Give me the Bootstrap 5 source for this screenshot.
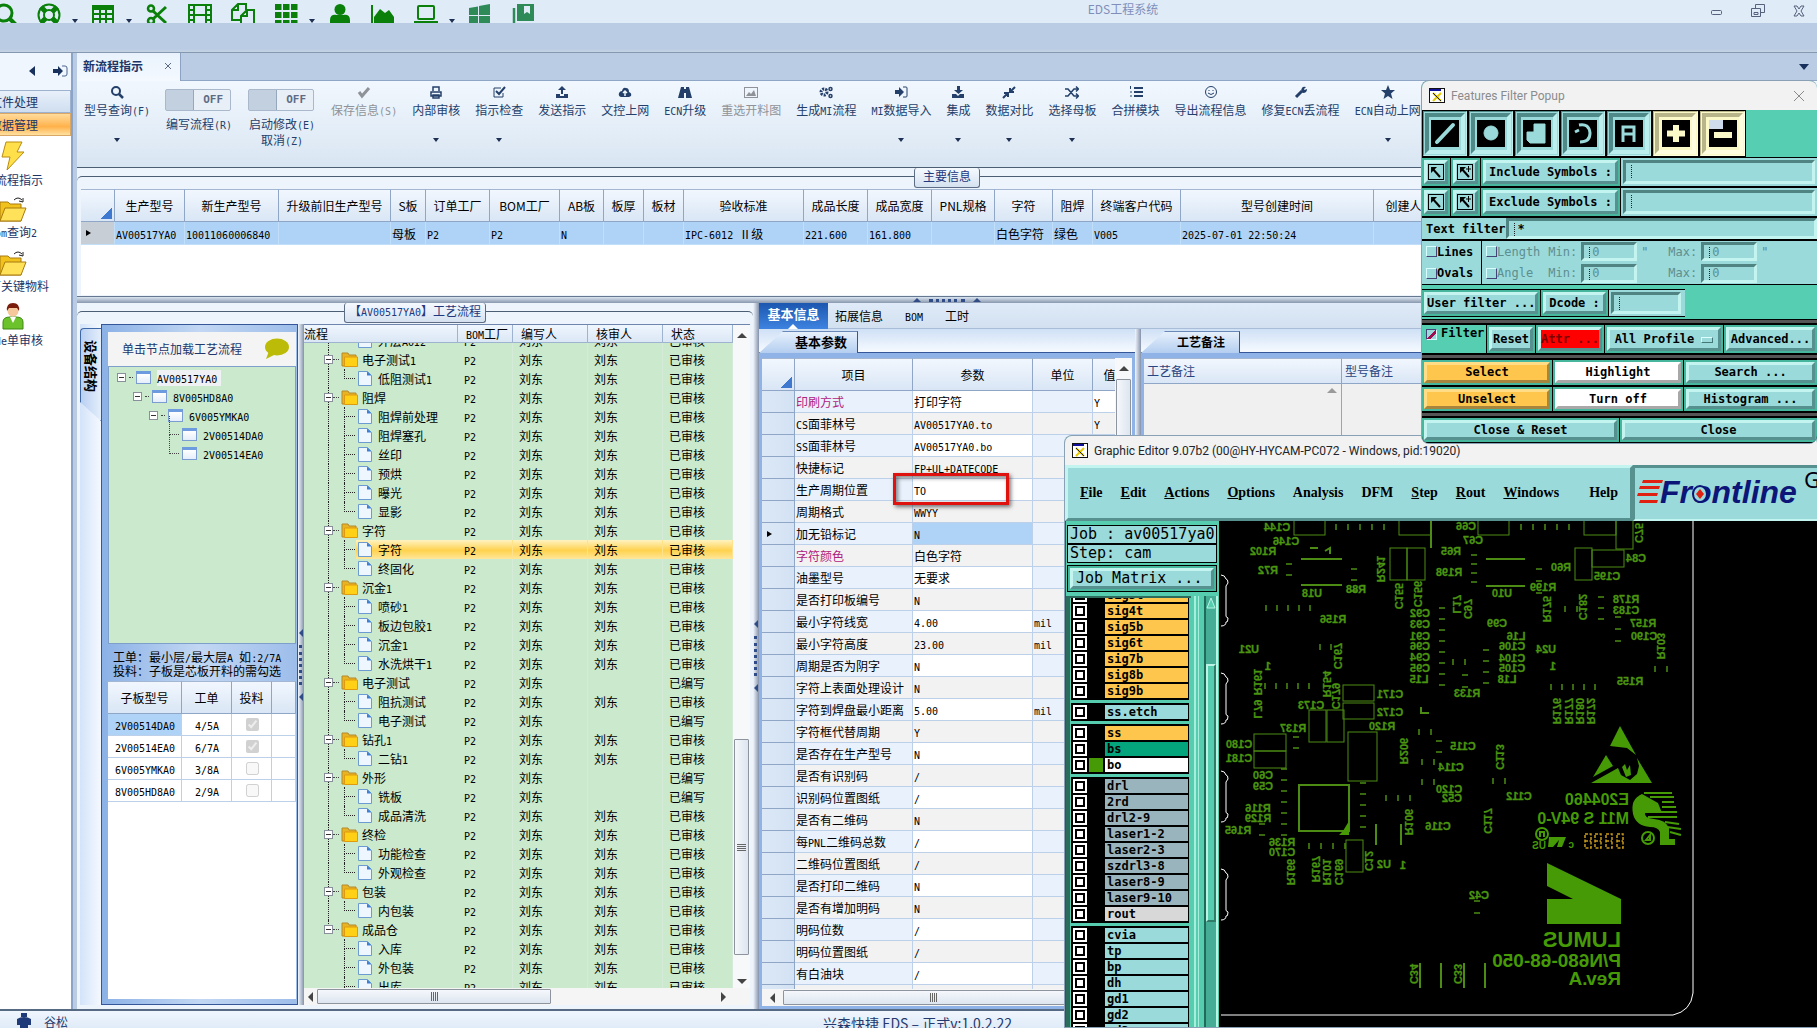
<!DOCTYPE html>
<html lang="zh-CN">
<head>
<meta charset="utf-8">
<meta name="viewport" content="width=device-width, initial-scale=1">
<title>EDS工程系统</title>
<link href="https://cdn.jsdelivr.net/npm/bootstrap@5.3.0/dist/css/bootstrap.min.css" rel="stylesheet">
<style>
html,body{height:100%}
body{font:12px/16px "Noto Sans CJK SC",sans-serif;color:#000;background:#bacce4;overflow:hidden;position:relative}
button{font:inherit;color:inherit;background:none;border:0;padding:0}
a{color:inherit;text-decoration:none}
svg{display:block;flex:none}
table{border-collapse:separate;border-spacing:0;table-layout:fixed}
.lat{font-family:"DejaVu Sans Mono",monospace;font-size:10px;line-height:0}
.nw{white-space:nowrap}
/* title bar */
.titlebar{height:23px;background:#dfebf7;flex:none}
.quick{gap:11px;color:#0a800a;height:30px;margin-left:-6px}
.quick button{width:24px}
.quick .caretb{width:8px;height:8px;padding-top:8px}
.quick .spaced{margin-left:8px}
.caret{width:0;height:0;border:3px solid transparent;border-top:4px solid #1d2f52;border-bottom:0}
.apptitle{color:#7f8fba;flex:1;text-align:center;padding-top:1px}
.winbtns{gap:28px;padding:4px 12px 0 0;color:#56617c}
.menuband{height:30px;background:linear-gradient(#bacce4 90%,#c6d4e4);border-bottom:1px solid #8499b0;flex:none}
/* side bar */
.side{width:73px;background:#fff;border-right:2px solid #8ba3c7;flex:none;overflow:hidden}
.sidetop{height:37px;background:#eff6fe;gap:17px;padding-right:9px;width:77px}
.sidecat{height:23px;line-height:22px;text-indent:-10px;text-align:left;border:1px solid #9db2cf;border-left:0;background:linear-gradient(#e8f0fa,#cfdef0);color:#1c3566;width:100%}
.sidecat.on{background:linear-gradient(#ffdc9c,#ffc067 40%,#ffb24b 60%,#ffe0a0);border-color:#d9a866}
.sideitem{width:80px;margin-left:-27px;height:54px;color:#1c3566;padding-top:4px}
.sideitem svg{margin:0 auto}
/* document tabs */
.doctabs{height:28px;background:#bacce4;border-bottom:1px solid #90a6c6;flex:none}
.doctab{width:104px;background:linear-gradient(#e9f2fc,#f4f9ff);border-right:1px solid #8ca2c4;padding:0 8px 3px 6px;color:#1c3566;font-weight:700;margin-bottom:-1px}
.ribbon{height:87px;background:linear-gradient(#f1f7fe,#e3edf7 60%,#d8e5f2);border-bottom:1px solid #4c5e74;padding:2px 0 0 7px;gap:15px;color:#24406a;flex:none;overflow:hidden}
.rb{flex:none;text-align:center;white-space:nowrap;position:relative}
.rb svg{margin:1px auto 2px;height:16px}
.rb .caret{margin:20px auto 0}
.rb.off{color:#8f9399}
.tog{width:68px}
.sw{width:66px;height:22px;border:1px solid #a9b8ca;border-radius:2px;background:#e9eff6;margin:6px 0 5px;font:700 11px/20px "DejaVu Sans Mono",monospace;color:#5d6c84;padding-right:7px;text-align:right;position:relative;background-image:linear-gradient(90deg,#c3d0df 0 27px,#96a8be 27px 28px,transparent 28px)}
/* group frames */
.frame{background:#edf4fc;padding-top:8px}
.cap{height:13px;border-top:1px solid #4c5e74;border-radius:5px 5px 0 0}
.cap>span{background:linear-gradient(#f6faff,#d5e1f0);border:1px solid #5c6d84;border-top:0;border-radius:3px;margin-top:-9px;height:20px;padding:0 8px;line-height:16px;color:#22387c;position:relative;white-space:nowrap}
.cap.song>span{padding:0 4px}
.dg th{font-weight:400;text-align:center;background:linear-gradient(#f2f7fe,#d9e6f5);border-right:1px solid #8fa6c6;border-bottom:1px solid #8fa6c6;border-top:1px solid #a3b7d3;height:33px;padding:0;overflow:hidden;white-space:nowrap}
.dg td{padding:0 0 0 1px;overflow:hidden;white-space:nowrap;border-right:1px solid #bcd0ea;border-bottom:1px solid #bcd0ea;height:22px;line-height:21px}
.corner{background:linear-gradient(135deg,transparent 50%,#3f78d0 50%) no-repeat 100% 100%/11px 11px;width:11px;height:11px;margin:16px 2px 0 auto}
.mainrow td{background:#afd3f7;border-color:#c2dffa;height:23px}
.tri{width:0;height:0;border:3px solid transparent;border-left:5px solid #000;border-right:0;margin-left:4px}
.maininfo{height:128px;flex:none}
.hsplit{height:7px;background:linear-gradient(#dbe5f1,#8a98ae);flex:none;border-top:1px solid #66788f}
.vsplit{width:6px;background:linear-gradient(90deg,#f2f7fd,#8492ab);flex:none}
.grip{border:0 dotted #2f4c86}
.hsplit .grip{width:36px;border-top-width:3px}
.vsplit .grip{height:40px;border-left-width:3px;margin:8px 1px}
.up{width:0;height:0;border:4px solid transparent;border-bottom-color:#2f4c86;border-top:0}
.lf{width:0;height:0;border:4px solid transparent;border-right-color:#2f4c86;border-left:0;margin-left:1px}
/* structure panel */
.struct{width:221px;padding-left:3px;flex:none}
.vtab{width:21px;background:linear-gradient(90deg,#d3e3f9,#f5f9ff)}
.vtab a{writing-mode:vertical-rl;text-orientation:sideways;font-weight:700;font-size:13px;color:#000;height:93px;width:21px;border:1px solid #3e67a8;border-right:0;border-radius:4px 0 0 0;padding:11px 0 0 0;line-height:19px;background:linear-gradient(90deg,#b9d0f2,#e4eefb);margin-top:4px;display:block;clip-path:polygon(0 0,100% 0,100% 100%,0 74px)}
.sbody{background:linear-gradient(90deg,#8bb1e6,#c2d7f3 50%,#9dbdea);border:1px solid #35579a;padding:7px 1px 5px 6px;flex:1;min-width:0}
.shead{height:34px;background:#f4f4f4;color:#22386c;padding:0 6px 0 14px}
.green{background:#cae9cd;border:1px solid #7f9fcb}
.nodes{height:278px;padding:1px 0 0 8px;flex:none}
.node{height:19px;gap:3px}
.box{width:9px;height:9px;border:1px solid #8a8f9c;background:#fff linear-gradient(#333,#333) no-repeat center/5px 1px;flex:none}
.dots{border-top:1px dotted #444;width:6px;height:0}
.vdot{border-left:1px dotted #444;border-bottom:1px dotted #444;width:10px;height:19px;margin-top:-19px}
.win{width:15px;height:13px;border:1px solid #7a9cd0;border-top:3px solid #6d9be0;background:linear-gradient(#fff,#e4eefb);margin-right:3px}
.node span.sel{background:#f0f1f4}
.hint{height:37px;padding:6px 0 0 5px;line-height:14px;white-space:nowrap;flex:none}
.sub td{text-align:center}
.sub input{width:13px;height:13px;margin:0 auto;display:block}
/* process list */
.proc{width:446px;flex:none;border-top:1px solid #6e86ad}
.pscroll{overflow:hidden;flex:1;min-width:0;background:#cae9cd}
.pt th{position:sticky;top:0;z-index:2;font-weight:400;background:linear-gradient(#eff6fe,#dbe7f5);border-right:1px solid #9db3d0;border-bottom:1px solid #9db3d0;height:18px;line-height:16px;padding:0 0 0 8px;white-space:nowrap}
.pt th:first-child{padding-left:0}
.pt td{height:19px;line-height:18px;padding:0 0 0 6px;border-right:1px solid #d5ead8;white-space:nowrap}
.pt td:first-child{padding:0;position:relative;border-right:0}
.pt td:first-child::before{content:"";position:absolute;left:24px;top:0;height:19px;border-left:1px dotted #222}
.pt tr.end td:first-child::before{height:10px}
.pt tr.after td:first-child::before{display:none}
.gl{padding-left:20px;height:19px}
.gl .box{position:relative;z-index:1}
.gl .dots{width:6px}
.gl svg{margin:0 4px 0 2px}
.cl{padding-left:40px;height:19px}
.cl i{width:11px;height:10px;border-left:1px dotted #222;border-bottom:1px dotted #222;align-self:flex-start}
.cl svg{margin:0 6px 0 3px}
.cl:not(.lastc)::after{content:"";position:absolute;left:40px;top:10px;height:9px;border-left:1px dotted #222}
.hot td{background:linear-gradient(#fff3c0,#ffd24f 55%,#ffe79a);border-right-color:#ffe28c}
.hot td:first-child{background:linear-gradient(#fff3c0,#ffd24f 55%,#ffe79a) no-repeat 52px 0}
.vbar{width:17px;background:#f7f8fa;flex:none;padding:0 1px}
.hbar{height:17px;background:#f5f5f6;flex:none;padding:1px 0}
.thumb{background:linear-gradient(90deg,#f5f8fc,#dde5ef);border:1px solid #8d949e;border-radius:1px}
.hbar .thumb{background:linear-gradient(#f5f8fc,#dde5ef)}
.ridge{width:7px;height:9px;background:repeating-linear-gradient(90deg,#666 0 1px,transparent 1px 2px)}
.ridge.r2{width:9px;height:7px;background:repeating-linear-gradient(#666 0 1px,transparent 1px 2px)}
.al,.ar,.au,.ad{width:0;height:0;border:5px solid transparent;flex:none}
.al{border-right-color:#444;border-left:0}.ar{border-left-color:#444;border-right:0}
.au{border-bottom-color:#444;border-top:0}.ad{border-top-color:#444;border-bottom:0}
/* detail panel */
.dtabs{height:26px;background:linear-gradient(#dfebf8,#d3e0f0);border-bottom:1px solid #a9bcd8;gap:22px;flex:none}
.dtabs .act{background:linear-gradient(#1c57b0,#3e83e0);color:#fff;font-weight:700;width:69px;text-align:center;font-size:13px;line-height:22px;height:26px;margin-right:-15px;position:relative}
.dtabs .act::after{content:"";position:absolute;left:29px;bottom:0;border:5px solid transparent;border-bottom-color:#fff;border-top:0}
.subtabs{height:24px;background:linear-gradient(#cfe0f6,#f6faff);border-bottom:1px solid #35579a;padding-top:2px}
.subtab{font-weight:700;height:22px;width:99px;background:linear-gradient(#e6f0fc,#b4cef0);clip-path:polygon(0 100%,24px 0,100% 0,100% 100%);padding-left:36px;line-height:20px;border-right:1px solid #35579a;border-top:1px solid #6a88b8;font-size:13px}
.subtab.thin{font-size:12px}
.bluebody{background:#8fb3e6;padding:5px 3px 3px 3px;flex:1;min-height:0}
.params td:first-child{background:linear-gradient(90deg,#dce8f6,#d3e2f4);border-color:#8fa6c6}
.params td{background:#e8f1fc}
.params td:nth-child(3),.params td:nth-child(5){background:#fff}
.params tr:nth-child(even) td:nth-child(n+2){background:#f2f2f2}
.params td.pink{color:#b0207c}
.params tr td:nth-child(n).cur{background:#afd3f7}
.params td.markcell{overflow:visible;position:relative}
.redbox{position:absolute;left:-20px;top:-6px;width:116px;height:32px;border:3px solid #e01210;box-shadow:2px 2px 4px #0008,inset 2px 2px 4px #0007;z-index:3}
.dg.notes th{height:26px;text-align:left;color:#2a4480;padding-left:3px}
.status{height:19px;background:linear-gradient(#f0f6fd,#dfebf8);border-top:2px solid #566a84;color:#24396e;flex:none;white-space:nowrap;overflow:hidden;line-height:22px}
.ver{left:45.3%;font-size:14px;line-height:24px}
/* floating tools */
.tool{position:absolute;right:0;border-radius:8px 8px 0 0;overflow:hidden;background:#55ceb1;border:1px solid #8aa0b4;border-right:0;color:#000;font:700 12px/16px "DejaVu Sans Mono",monospace}
.tool .bar{background:#f2f2f3;height:29px;font:12px/16px Roboto,sans-serif;padding:0 12px 0 7px;gap:6px;flex:none}
.popup{top:80px;width:396px;z-index:5;border-radius:8px}
.popup .bar{color:#8b8b8b}
.pr{background:#000;gap:1px;border-top:1px solid #000;border-bottom:1px solid #000}
.fr{background:#46b79c;padding:2px;display:flex;min-width:0}
.col3>.fr:nth-child(-n+2){width:130px;flex:none}
.bev{flex:1;min-width:0;background:#9bdada;border:3px solid;border-color:#c3f4ef #56908f #56908f #c3f4ef;text-align:center;white-space:nowrap;font:inherit;line-height:15px;padding:0}
.bev.amber{background:#ffc64d;border-color:#ffdc86 #a8853c #a8853c #ffdc86}
.bev.whitey{background:#fff;border-color:#fff #a8a8a8 #a8a8a8 #fff}
.bev.red{background:#f00;color:#7a0000}
.well{flex:1;min-width:0;width:0;background:#9bdada repeating-linear-gradient(#222 0 1px,transparent 1px 2px) no-repeat 5px 2px/1px 13px;border:3px solid;border-color:#4f8483 #c3f4ef #c3f4ef #4f8483;font:inherit;padding:0 0 0 8px;border-radius:0;outline:0}
.aq{background:#9bdada}
.tb7{height:47px;background:#000;gap:2px;padding:1px}
.tb7 .bev{flex:none;width:44px;border-width:6px;border-color:#4f8a88 #bdeeee #bdeeee #4f8a88;outline:1px solid #9bdada;outline-offset:-2px}
.tb7 .pale{width:45px;background:#fbf9c8;border-color:#b8b58a #fffde0 #fffde0 #b8b58a;outline-color:#fbf9c8}
.tb7 svg{margin:0 auto}
.dim{color:#5d8e90;font-style:normal;font-weight:400}
.tick{appearance:none;width:11px;height:11px;border:1px solid;border-color:#d8ffff #447 #447 #d8ffff;background:#9bdada;margin:0;flex:none}
.tick:checked{background:linear-gradient(135deg,#9bdada 45%,#a01050 45% 70%,#9bdada 70%);border-color:#447 #d8ffff #d8ffff #447}
.well.sm{flex:none;width:56px;height:19px}
.rule{height:5px;background:#555;border:solid #000;border-width:1px 0}
.editor{top:435px;bottom:0;width:753px;z-index:4}
.menus{background:#9bdada;border:3px solid;border-color:#c3f4ef #56908f #56908f #c3f4ef;width:568px;font:700 14px/18px "Liberation Serif",serif;padding:0 12px;gap:18px;flex:none}
.menus a::first-letter{text-decoration:underline}
.menus a.nu::first-letter{text-decoration:none}
.brand{flex:1;background:#9bdada;border:3px solid #56908f;border-width:3px 0 0 2px;border-bottom:2px solid #c3f4ef;min-width:0;overflow:hidden}
.edleft{width:154px;flex:none;background:#57cdb0;border-left:1px solid #2c5a4c;font-size:12px}
.jobline{font:15px/17px "DejaVu Sans Mono",monospace;background:#9bdada;border:1px solid #000;height:19px;margin:0 2px 0 1px;padding-left:2px;white-space:nowrap}
.jobbtn{margin:2px 2px 4px 1px;border:1px solid #000;height:27px}
.jobbtn .bev{font-size:15px;font-weight:400;text-align:left;padding-left:3px}
.layers{overflow:hidden;flex:1;min-height:0}
.lwrap{border-left:4px solid #2d6b5c;padding-left:1px;width:125px;border-top:2px solid #2d6b5c;overflow:hidden}
.lg{background:#000;padding:1px 1px 1px 2px;margin-bottom:3px;width:118px}
.lg:first-child{margin-top:-12px}
.lr{height:16px;gap:2px}
.lr input{appearance:none;width:14px;height:14px;margin:0;background:#fff;border:0;flex:none;box-shadow:inset 0 0 0 2px #fff,inset 0 0 0 4px #000}
.lr b{width:14px;height:14px;flex:none}
.lr label{flex:1;height:14px;line-height:14px;padding-left:2px;overflow:hidden}
.strip{width:13px;background:linear-gradient(90deg,#57cdb0 3px,#a5efdc 3px 5px,#57cdb0 5px 7px,#a5efdc 7px 8px,#57cdb0 8px)}
.lbar{width:14px;background:#45ad95;border-left:2px solid #1f6a58;border-right:2px solid #b9f4e4}
.lbar .thumb{margin-top:54px;height:258px;border:2px solid;border-color:#b9f4e4 #2f7b68 #2f7b68 #b9f4e4;background:#57cdb0}
.pcb{flex:1;min-width:0;background:#000;overflow:hidden}
</style>
<script src="https://cdn.jsdelivr.net/npm/bootstrap@5.3.0/dist/js/bootstrap.bundle.min.js"></script>
</head>
<body>
<div class="d-flex flex-column vh-100">
<header class="titlebar d-flex">
  <nav class="quick d-flex align-items-center song" id="quick"></nav>
  <div class="apptitle">EDS工程系统</div>
  <div class="winbtns d-flex">
    <svg width="12" height="14" fill="none" stroke="currentColor"><rect x=".5" y="6.500" width="10" height="4" rx="1"/></svg>
    <svg width="14" height="14" fill="none" stroke="currentColor"><path d="M4.500 4V.5h9v8H10M.5 4.500h9v8h-9zM3 8.500h4v2H3z"/></svg>
    <svg width="12" height="14" fill="none" stroke="currentColor"><path d="M1 2h3l2 3 2-3h3L8 7l3 5H8L6 9l-2 3H1l3-5z"/></svg>
  </div>
</header>
<div class="menuband"></div>
<div class="d-flex flex-grow-1" style="min-height:0">
  <aside class="side">
    <div class="sidetop d-flex align-items-center justify-content-end">
      <svg width="8" height="12"><path d="M7 0v10L1 5z" fill="#17305c"/></svg>
      <svg width="15" height="13"><path d="M0 4h5V1l5 5-5 5V8H0z" fill="#17305c"/><path d="M9 1h3q2 0 2 2v6q0 2-2 2H9" fill="none" stroke="#4c6590"/></svg>
    </div>
    <button class="sidecat d-block">文件处理</button>
    <button class="sidecat on d-block">数据管理</button>
    <div class="song text-center nw">
      <div class="sideitem"><svg width="26" height="32" viewBox="0 0 26 32"><path d="M6 2h16l-5 10h7L7 30l3-13H2z" fill="#ffe04a" stroke="#b98b10"/></svg>新流程指示</div>
      <div class="sideitem fold">Bom查询2</div>
      <div class="sideitem fold">新厂关键物料</div>
      <div class="sideitem"><svg width="24" height="30" viewBox="0 0 24 30"><path d="M2 27V20q0-5 7-5h6q7 0 7 5v7z" fill="#6cc22a" stroke="#3f8a12"/><path d="M9 15l3 6 3-6z" fill="#fff"/><circle cx="12" cy="9" r="5.500" fill="#f6c79a"/><path d="M6 9q-1-8 6-8t6 8l-2-3H8z" fill="#7a1d0c"/></svg>Code单审核</div>
    </div>
  </aside>
  <main class="d-flex flex-column flex-grow-1 ms-1" style="min-width:0">
    <div class="doctabs d-flex justify-content-between">
      <div class="doctab d-flex justify-content-between align-items-center">新流程指示 <svg width="8" height="8" stroke="#5a6b88" fill="none"><path d="M1 1l6 6M7 1L1 7"/></svg></div>
      <div class="align-self-center me-2"><svg width="10" height="6"><path d="M0 0h10L5 6z" fill="#17305c"/></svg></div>
    </div>
    <div class="ribbon d-flex align-items-start song" id="ribbon"></div>
    <section class="frame maininfo">
      <div class="cap d-flex justify-content-center"><span>主要信息</span></div>
      <div class="bg-white ms-1" style="height:106px"><table class="dg w-100" id="maint"></table></div>
    </section>
    <div class="hsplit d-flex justify-content-center align-items-center gap-2"><i class="up"></i><i class="grip"></i><i class="up"></i></div>
    <div class="d-flex flex-grow-1 frame p-0" style="min-height:0">
      <section class="d-flex flex-column" style="width:676px;flex:none">
        <div class="pt-2"><div class="cap d-flex justify-content-center song"><span>【AV00517YA0】工艺流程</span></div></div>
        <div class="d-flex flex-grow-1 pb-1" style="min-height:0">
          <div class="struct d-flex">
            <div class="vtab"><a href="#">设备结构</a></div>
            <div class="sbody d-flex flex-column">
              <div class="shead d-flex align-items-center justify-content-between">单击节点加载工艺流程 <svg width="26" height="22"><ellipse cx="13" cy="9" rx="12" ry="8.500" fill="#bcbc08"/><path d="M5 13l-3 8 10-5z" fill="#bcbc08"/></svg></div>
              <div class="green nodes song" id="nodes"></div>
              <div class="hint song">工单：最小层/最大层A 如:2/7A<br>投料：子板是芯板开料的需勾选</div>
              <div class="bg-white flex-grow-1"><table class="dg sub song w-100" id="sub"></table></div>
            </div>
          </div>
          <div class="vsplit d-flex flex-column justify-content-center"><i class="lf"></i><i class="grip"></i><i class="lf"></i></div>
          <div class="proc d-flex flex-column">
            <div class="d-flex flex-grow-1" style="min-height:0">
              <div class="pscroll song" id="pscroll"><table class="pt" id="pt" style="width:429px"></table></div>
              <div class="vbar d-flex flex-column align-items-center">
                <i class="au mt-2"></i><div class="flex-grow-1"></div>
                <div class="thumb w-100 d-flex align-items-center justify-content-center" style="height:216px"><i class="ridge r2"></i></div>
                <i class="ad mb-1 mt-4"></i>
              </div>
            </div>
            <div class="hbar d-flex align-items-center"><i class="al ms-1"></i><div class="thumb h-100 ms-1 d-flex align-items-center justify-content-center" style="width:234px"><i class="ridge"></i></div><div class="flex-grow-1"></div><i class="ar me-4"></i></div>
          </div>
        </div>
      </section>
      <div class="vsplit d-flex flex-column justify-content-center"><i class="lf"></i><i class="grip"></i><i class="lf"></i></div>
      <section class="d-flex flex-column flex-grow-1" style="min-width:0">
        <nav class="dtabs d-flex align-items-center song"><a class="act" href="#">基本信息</a><a href="#">拓展信息</a><a href="#">BOM</a><a href="#">工时</a></nav>
        <div class="d-flex flex-grow-1" style="min-height:0">
          <div class="d-flex flex-column" style="width:376px;flex:none">
            <div class="subtabs"><div class="subtab">基本参数</div></div>
            <div class="bluebody d-flex flex-column">
              <div class="d-flex flex-grow-1 overflow-hidden" style="min-height:0">
                <div class="overflow-hidden flex-grow-1 song bg-white"><table class="dg params" id="params" style="width:365px"></table></div>
                <div class="vbar"><i class="au d-block mx-auto mt-2 mb-2"></i><div class="thumb h-75"></div></div>
              </div>
              <div class="hbar d-flex align-items-center"><i class="al ms-2"></i><div class="thumb h-100 ms-2 flex-grow-1 d-flex align-items-center justify-content-center me-5"><i class="ridge"></i></div></div>
            </div>
          </div>
          <div class="vsplit"></div>
          <div class="d-flex flex-column flex-grow-1" style="min-width:0">
            <div class="subtabs"><div class="subtab thin">工艺备注</div></div>
            <div class="bluebody"><div class="h-100" style="background:#f0f0f0"><table class="dg notes w-100"><colgroup><col style="width:198px"><col></colgroup><tr><th>工艺备注</th><th>型号备注</th></tr><tr><td class="pe-1 pt-1" style="height:60px;vertical-align:top;border-color:#8fa6c6"><i class="au d-block ms-auto" style="opacity:.5"></i></td><td></td></tr></table></div></div>
          </div>
        </div>
      </section>
    </div>
  </main>
</div>
<footer class="status d-flex position-relative">
  <svg width="16" height="18" class="ms-3" viewBox="0 0 16 18"><path d="M5 2h6v4H5zM1 8q3-2 7-2t7 2v6h-3v4H4v-4H1z" fill="#1f3a78"/></svg>
  <span class="ms-2 ps-1">谷松</span>
  <span class="position-absolute ver">兴森快捷 EDS – 正式v:1.0.2.22</span>
</footer>
</div>

<!-- Graphic editor window -->
<section class="tool editor d-flex flex-column">
  <div class="bar d-flex align-items-center text-dark"><svg class="xico" width="16" height="15"></svg>Graphic Editor 9.07b2 (00@HY-HYCAM-PC072 - Windows, pid:19020)</div>
  <div class="d-flex" style="height:56px;flex:none;background:#2d6b5c">
    <nav class="menus d-flex align-items-center"><a href="#">File</a><a href="#">Edit</a><a href="#">Actions</a><a href="#">Options</a><a href="#" class="nu">Analysis</a><a href="#" class="nu">DFM</a><a href="#">Step</a><a href="#">Rout</a><a href="#">Windows</a><a href="#" class="nu ms-auto">Help</a></nav>
    <div class="brand"><svg width="190" height="50"><text x="25" y="35" font-family="Liberation Sans" font-style="italic" font-weight="700" font-size="32" fill="#0c1578">Frontline</text><ellipse cx="65" cy="26" rx="7" ry="8" fill="#9bdada" stroke="#0c1578" stroke-width="2"/><path d="M65 21l4 5-4 5-4-5z" fill="#e02010"/><path d="M8 12h20l-1 3H7zM5 18h20l-1 3H4zM3 25h20l-1 3H2zM5 32h18l-1 3H4z" fill="#e02010"/><text x="169" y="20" font-family="Noto Sans" font-size="22" font-weight="400" fill="#001">Genesis</text></svg></div>
  </div>
  <div class="d-flex flex-grow-1" style="min-height:0">
    <div class="edleft d-flex flex-column">
      <div class="jobline mt-1">Job : av00517ya0</div><div class="jobline">Step: cam</div>
      <div class="jobbtn fr"><button class="bev">Job Matrix ...</button></div>
      <div class="d-flex layers"><div class="lwrap" id="layers"></div><div class="strip"></div><div class="lbar"><svg width="10" height="14"><path d="M5 2L1 12h8z" fill="#57cdb0" stroke="#b9f4e4"/></svg><div class="thumb"></div></div></div>
    </div>
    <div class="pcb"><svg id="pcb" width="100%" height="100%" viewBox="1219 522 598 506" preserveAspectRatio="xMinYMin slice"></svg></div>
  </div>
</section>

<!-- Features filter popup -->
<section class="tool popup">
  <div class="bar d-flex align-items-center"><svg class="xico" width="16" height="15"></svg><span class="flex-grow-1">Features Filter Popup</span><svg width="12" height="12" stroke="#8b8b8b"><path d="M1 1l10 10M11 1L1 11"/></svg></div>
  <div class="d-flex"><div class="tb7 d-flex" id="tb7"></div></div>
  <form onsubmit="return false">
  <div class="pr d-flex" style="height:30px"><div class="fr"><button class="bev arw"></button></div><div class="fr"><button class="bev arw pl"></button></div><div class="fr" style="width:139px"><button class="bev">Include Symbols :</button></div><div class="fr aq flex-grow-1"><input class="well" aria-label="Include Symbols"></div></div>
  <div class="pr d-flex" style="height:30px"><div class="fr"><button class="bev arw"></button></div><div class="fr"><button class="bev arw pl"></button></div><div class="fr" style="width:139px"><button class="bev">Exclude Symbols :</button></div><div class="fr aq flex-grow-1"><input class="well" aria-label="Exclude Symbols"></div></div>
  <div class="pr d-flex aq align-items-center" style="height:23px"><label for="tf" class="ps-1">Text filter</label><input id="tf" class="well h-100" value="*"></div>
  <div class="pr d-flex" style="height:45px">
    <div class="aq d-flex flex-column justify-content-around ps-1" style="width:59px"><label class="d-flex align-items-center"><input type="checkbox" class="tick">Lines</label><label class="d-flex align-items-center"><input type="checkbox" class="tick">Ovals</label></div>
    <div class="aq flex-grow-1 d-flex flex-column justify-content-around ps-1 dim" id="minmax"></div>
  </div>
  <div style="height:4px"></div>
  <div class="d-flex"><div class="pr d-flex" style="height:28px"><div class="fr" style="width:118px"><button class="bev">User filter ...</button></div><div class="fr" style="width:67px"><button class="bev">Dcode :</button></div><div class="fr aq pe-1" style="width:76px"><input class="well" aria-label="Dcode"></div></div></div>
  <div style="height:2px"></div><div class="rule"></div>
  <div class="pr d-flex" style="height:30px"><label class="d-flex align-items-start ps-1 gap-1" style="width:64px;background:#55ceb1"><input type="checkbox" class="tick mt-1" checked>Filter</label><div class="fr" style="width:48px"><button class="bev">Reset</button></div><div class="fr" style="width:68px"><button class="bev red">Attr ...</button></div><div class="fr" style="width:118px"><button class="bev">All Profile <span class="d-inline-block" style="width:12px;height:6px;border:1px solid;border-color:#dff #477 #477 #dff"></span></button></div><div class="fr flex-grow-1"><button class="bev">Advanced...</button></div></div>
  <div class="rule"></div>
  <div class="pr d-flex col3" style="height:27px"><div class="fr"><button class="bev amber">Select</button></div><div class="fr"><button class="bev whitey">Highlight</button></div><div class="fr flex-grow-1"><button class="bev">Search ...</button></div></div>
  <div class="pr d-flex col3" style="height:26px"><div class="fr"><button class="bev amber">Unselect</button></div><div class="fr"><button class="bev whitey">Turn off</button></div><div class="fr flex-grow-1"><button class="bev">Histogram ...</button></div></div>
  <div class="rule"></div>
  <div class="pr d-flex" style="height:26px"><div class="fr w-50"><button class="bev">Close &amp; Reset</button></div><div class="fr w-50"><button class="bev">Close</button></div></div>
  </form>
</section>

<script>
const $=s=>document.querySelector(s), $$=s=>[...document.querySelectorAll(s)];
// quick-access icons
const S=(p,x='')=>`<svg width="24" height="24" viewBox="0 0 24 24" fill="none" stroke="currentColor" stroke-width="3" ${x}>${p}</svg>`;
const grid9=[0,8,16].map(y=>[0,8,16].map(x=>`<rect x="${x+1}" y="${y+1}" width="6.500" height="6"/>`).join('')).join('');
const Q=[
 S('<circle cx="10" cy="10" r="8"/><path d="M15 15l7 7" stroke-width="4"/>'),
 S('<circle cx="12" cy="12" r="10.500" stroke-width="2"/><circle cx="12" cy="12" r="5" stroke-width="2"/><path d="M4 4l5 5M20 4l-5 5M4 20l5-5M20 20l-5-5" stroke-width="5"/>'),'v',
 S('<rect x="2" y="3" width="20" height="18" stroke-width="2"/><path d="M2 5h20" stroke-width="4"/><path d="M2 11h20M2 16h20M9 5v15M15 5v15" stroke-width="2"/>'),'v',
 S('<circle cx="6" cy="5.500" r="3" stroke-width="2.500"/><circle cx="6" cy="18" r="3" stroke-width="2.500"/><path d="M8 8l13 12M8 16L21 4"/>'),
 S('<rect x="1" y="2" width="22" height="20" stroke-width="2"/><path d="M6 2v20M18 2v20M6 12h12M1 7h5M1 12h5M1 17h5M18 7h5M18 12h5M18 17h5" stroke-width="2"/>'),
 S('<path d="M10 17H1V7l6-6h8v6M7 1v6H1M10 23V13l6-6h7v16zM16 7v6h-6" stroke-width="2"/>'),
 S(grid9,'style="fill:currentColor;stroke:none"'),'v',
 S('<circle cx="12" cy="6.500" r="5.500"/><path d="M2 22V17q0-6 7-5h6q7-1 7 5v5q-10 3-20 0z"/>','style="fill:currentColor;stroke:none"'),
 S('<path d="M1 2v20h23" stroke-width="2"/><path d="M3 20v-6l6-8 5 4 4-3 5 7v6z" fill="currentColor" stroke="none"/>'),
 S('<rect x="4" y="3" width="16" height="13" rx="1" stroke-width="2"/><path d="M0 19.500h24" stroke-width="3"/>'),'v',
 S('<path d="M1 5l9-1.500V12H1zM11 3l11-2v11H11zM1 13h9v8.500L1 20zM11 13h11v11l-11-2z" fill="#2e8b57" stroke="none"/>'),
 S('<path d="M3 5v15q0 2 2 2h13" stroke-width="2.500"/><path d="M6 1h17v17H6z" fill="#2e8b57" stroke="none"/><path d="M13 3h6v8l-3-2-3 2z" fill="#dfebf7" stroke="none"/>','style="color:#2e8b57"')];
$('#quick').innerHTML=Q.map((q,i)=>q=='v'?'<button class="caretb" aria-label="more"><i class="caret d-block"></i></button>':`<button class="${i&&Q[i-1]!='v'?'spaced':''}" aria-label="tool">${q}</button>`).join('');
$$('.fold').forEach(e=>e.insertAdjacentHTML('afterbegin','<svg width="28" height="30" viewBox="0 0 28 30"><path d="M1 8h8l2 2h11v17H1z" fill="#f2c21c" stroke="#a87b10"/><path d="M1 27l5-13h21l-5 13z" fill="#ffe259" stroke="#a87b10"/><path d="M15 6q4-4 8 0M20 7l4 1V4" fill="none" stroke="#222"/></svg>'));
$$('.xico').forEach(e=>e.innerHTML='<rect x=".5" y=".5" width="15" height="14" fill="#fff" stroke="#111"/><path d="M1 1h11v2H1z" fill="#10109a"/><path d="M4 5l8 8M12 5l-8 8" stroke="#e8c800" stroke-width="2"/><path d="M4 5l8 8" stroke="#222"/>');
// ribbon
const I={
 s:'<circle cx="6" cy="6" r="4" stroke-width="2"/><path d="M9 9l4 4" stroke-width="2.500"/>',
 k:'<path d="M2 7l3 4 7-8" stroke-width="3"/>',
 p:'<path d="M4 6V2h6v4M2 7h10v4H2zM4 10h6v3H4z" stroke-width="1.500"/>',
 c:'<path d="M11 8v4H2V3h7" /><path d="M4 6l3 3 6-7" stroke-width="2"/>',
 u:'<path d="M7 1L3 5h3v4h2V5h3zM1 9h4v2h4V9h4v4H1z" fill="currentColor" stroke="none"/>',
 cl:'<path d="M3 12q-3-1-2-4 1-2 3-2 1-4 4-3 3 0 3 4 3 1 2 4l-2 1z" fill="currentColor" stroke="none"/><path d="M7 6v5M5 8l2-2 2 2" stroke="#eef5fd" stroke-width="1.500"/>',
 b:'<path d="M3 2h3v2h2V2h3l3 11H8V8H6v5H0z" fill="currentColor" stroke="none"/>',
 im:'<rect x="0.500" y="2.500" width="13" height="10"/><path d="M2 11l3-4 2 2 3-4 2 6z" fill="currentColor" stroke="none"/>',
 g:'<circle cx="5" cy="7" r="3" stroke-width="3" stroke-dasharray="2 1"/><circle cx="11.500" cy="4" r="1.500" stroke-width="1.500"/><circle cx="11.500" cy="11" r="1.500" stroke-width="1.500"/>',
 i:'<path d="M1 5h4V2l5 5-5 5V9H1z" fill="currentColor" stroke="none"/><path d="M9 2h3q1 0 1 1v8q0 1-1 1H9"/>',
 d:'<path d="M6 1h3v4h3L7.500 9 3 5h3zM1 9h4l2 2 2-2h4v4H1z" fill="currentColor" stroke="none"/>',
 z:'<path d="M13 2L9 6M8 3v4h4M1 13l4-4M6 12V8H2" stroke-width="2"/>',
 x:'<path d="M0 4h3l6 7h4M0 11h3l6-7h4M11 1.500L13.500 4 11 6.500M11 8.500l2.500 2.500-2.500 2.500" stroke-width="1.500"/>',
 l:'<path d="M5 3h9M5 7h9M5 11h9" stroke-width="2"/><path d="M1.500 1v3M1 7h2M1 11h2"/>',
 f:'<circle cx="7" cy="7" r="5.500"/><path d="M5 5v1M9 5v1M4 8q3 3 6 0"/>',
 w:'<path d="M2 12l6-6" stroke-width="3"/><path d="M12 2l-2 2 .5 1L13 4q0 4-4 4-3-2-1-5 1-2 4-1z" fill="currentColor" stroke="none"/>',
 st:'<path d="M7 0l2 5h5l-4 3.500L11.500 14 7 11l-4.500 3L4 8.500 0 5h5z" fill="currentColor" stroke="none"/>'};
const R=[['s','型号查询(F)',1],['T','编写流程(R)'],['T','启动修改(E)<br>取消(Z)'],['k','保存信息(S)',0,1],['p','内部审核',1],['c','指示检查',1],['u','发送指示'],['cl','文控上网'],['b','ECN升级'],['im','重选开料图',0,1],['g','生成MI流程'],['i','MI数据导入',1],['d','集成',1],['z','数据对比',1],['x','选择母板',1],['l','合拼模块'],['f','导出流程信息'],['w','修复ECN丢流程'],['st','ECN自动上网',1]];
$('#ribbon').innerHTML=R.map(([i,t,v,o])=>i=='T'?`<button class="rb tog"><span class="sw d-block">OFF</span>${t}</button>`:`<button class="rb ${o?'off':''}"><svg width="14" height="16" viewBox="0 -1 14 16" fill="none" stroke="currentColor">${I[i]}</svg>${t}${v?'<i class="caret d-block"></i>':''}</button>`).join('');
// main grid
const C=[[34,'<div class="corner"></div>','<i class="tri d-block"></i>'],[70,'生产型号','AV00517YA0'],[94,'新生产型号','10011060006840'],[112,'升级前旧生产型号',''],[35,'S板','母板'],[64,'订单工厂','P2'],[70,'BOM工厂','P2'],[44,'AB板','N'],[40,'板厚',''],[40,'板材',''],[120,'验收标准','IPC-6012 Ⅱ级'],[64,'成品长度','221.600'],[64,'成品宽度','161.800'],[63,'PNL规格',''],[58,'字符','白色字符'],[40,'阻焊','绿色'],[88,'终端客户代码','V005'],[193,'型号创建时间','2025-07-01 22:50:24'],[60,'创建人',''],[0,'','']];
$('#maint').innerHTML='<colgroup>'+C.map(c=>`<col${c[0]?` style="width:${c[0]}px"`:''}>`).join('')+'</colgroup><tr>'+C.map(c=>`<th>${c[1]}</th>`).join('')+'</tr><tr class="mainrow song">'+C.map((c,i)=>`<td${i?'':' style="background:#c8ced6"'}>${c[2]}</td>`).join('')+'</tr>';
// structure nodes
$('#nodes').innerHTML=[['AV00517YA0',0],['8V005HD8A0',1],['6V005YMKA0',2],['2V00514DA0',3],['2V00514EA0',3]].map(([t,l],i)=>`<div class="node d-flex align-items-center" style="padding-left:${l*16+(l==3?4:0)}px">${l<3?'<i class="box"></i><i class="dots" style="width:4px"></i>':'<i class="vdot"></i>'}<i class="win"></i><span class="${i?'':'sel pe-1'}">${t}</span></div>`).join('');
$('#sub').innerHTML='<colgroup><col style="width:74px"><col style="width:50px"><col style="width:40px"><col></colgroup><tr><th>子板型号</th><th>工单</th><th>投料</th><th></th></tr>'+[['2V00514DA0','4/5A',1],['2V00514EA0','6/7A',1],['6V005YMKA0','3/8A',0],['8V005HD8A0','2/9A',0]].map((r,i)=>`<tr><td${i?'':' style="background:#afd3f7"'}>${r[0]}</td><td>${r[1]}</td><td><input type="checkbox" aria-label="投料" disabled ${r[2]?'checked':''}></td><td></td></tr>`).join('');
// process tree
const P='-外层AOI2|+电子测试1|-低阻测试1|+阻焊|-阻焊前处理|-阻焊塞孔|-丝印|-预烘|-曝光|-显影|+字符|-字符*|-终固化|+沉金1|-喷砂1|-板边包胶1|-沉金1|-水洗烘干1|+电子测试!|-阻抗测试|-电子测试!|+钻孔1|-二钻1|+外形!|-铣板!|-成品清洗|+终检|-功能检查|-外观检查|+包装|-内包装|+成品仓|-入库|-外包装|-出库|-发货'.split('|');
const folder='<svg width="17" height="15" viewBox="0 0 17 15"><path d="M1 1h6l1 2h7v11H1z" fill="#e8b424" stroke="#b4882a"/><path d="M3.500 5h13v9.500h-13z" fill="#ffd016" stroke="#e09a10"/></svg>';
const page='<svg width="14" height="15" viewBox="0 0 14 15"><path d="M.5.5h9l4 4v10H.5z" fill="#eef6ff" stroke="#6b9bd0"/><path d="M9 .5v4h4.500z" fill="#3e7fd6"/></svg>';
$('#pt').innerHTML='<colgroup>'+[154,55,75,75,70].map(w=>`<col style="width:${w}px">`).join('')+'</colgroup><thead><tr>'+['流程','BOM工厂','编写人','核审人','状态'].map(t=>`<th>${t}</th>`).join('')+'</tr></thead><tbody>'+P.map((p,i)=>{const g=p[0]=='+',ed=p.endsWith('!'),t=p.slice(1).replace(/[!*]/,''),nx=P[i+1]||'-';
 return `<tr class="${p.endsWith('*')?'hot ':''}${i==31?'end':i>31?'after':''}"><td>${g?`<div class="gl d-flex align-items-center"><i class="box"></i><i class="dots"></i>${folder}${t}</div>`:`<div class="cl d-flex align-items-center ${nx[0]=='+'?'lastc':''}"><i></i>${page}${t}</div>`}</td><td>P2</td><td>刘东</td><td>${ed?'':'刘东'}</td><td>${ed?'已编写':'已审核'}</td></tr>`}).join('')+'</tbody>';
// parameter grid
const D=[['印刷方式','打印字符'],['CS面菲林号','AV00517YA0.to'],['SS面菲林号','AV00517YA0.bo'],['快捷标记','FP+UL+DATECODE'],['生产周期位置','TO'],['周期格式','WWYY'],['加无铅标记','N'],['字符颜色','白色字符'],['油墨型号','无要求'],['是否打印板编号','N'],['最小字符线宽','4.00','mil'],['最小字符高度','23.00','mil'],['周期是否为阴字','N'],['字符上表面处理设计','N'],['字符到焊盘最小距离','5.00','mil'],['字符框代替周期','Y'],['是否存在生产型号','N'],['是否有识别码','/'],['识别码位置图纸','/'],['是否有二维码','N'],['每PNL二维码总数','/'],['二维码位置图纸','/'],['是否打印二维码','N'],['是否有增加明码','N'],['明码位数','/'],['明码位置图纸','/'],['有白油块','/'],['','']];
$('#params').innerHTML='<colgroup>'+[33,118,120,60,34].map(w=>`<col style="width:${w}px">`).join('')+'</colgroup><thead><tr>'+['<div class="corner"></div>','项目','参数','单位','值'].map(t=>`<th>${t}</th>`).join('')+'</tr></thead><tbody>'+D.map((d,i)=>`<tr><td>${i==6?'<i class="tri d-block"></i>':''}</td><td class="${i==0||i==7?'pink':''}">${d[0]}</td><td class="${i==6?'cur':i==4?'markcell':''}">${d[1]}${i==4?'<i class="redbox"></i>':''}</td><td>${d[2]||''}</td><td>${i<3?'Y':''}</td></tr>`).join('')+'</tbody>';
// half-width Latin inside the Song-style Chinese text
$$('.song').forEach(root=>{const w=document.createTreeWalker(root,NodeFilter.SHOW_TEXT),a=[];while(w.nextNode())a.push(w.currentNode);
 a.forEach(n=>{if(n.parentElement.closest('.lat,.sw,svg')||!/[!-~]/.test(n.data))return;const f=document.createElement('span');f.innerHTML=n.data.replace(/[ -~]+/g,s=>`<span class="lat">${s}</span>`);n.replaceWith(f)})});
$('#pscroll').scrollTop=12;
// popup widgets
$('#tb7').innerHTML=['<path d="M6 22L22 5" stroke-width="4" stroke-linecap="round"/>','<circle cx="14" cy="13" r="7" fill="#9bdada"/>','<path d="M11 4h11v19H7l-3-3v-8h7z" fill="#9bdada"/>','<path d="M10 5q10-2 11 8 0 9-10 9M6 12l4-2" stroke-width="3"/>','<path d="M8 22V7h11v15M8 14h11" stroke-width="3"/>','<path d="M14 5v17M5 13.500h18" stroke="#fbf9c8" stroke-width="6"/>','<path d="M5 15h18" stroke="#fbf9c8" stroke-width="6"/><path d="M0 0h14v9H0z" fill="#cfdcee" stroke="none"/>'].map((p,i)=>`<button type="button" class="bev ${i>4?'pale':''}" aria-label="feature type"><svg width="28" height="27" fill="none" stroke="#9bdada"><rect width="28" height="27" fill="#000" stroke="none"/>${p}</svg></button>`).join('');
$$('.arw').forEach(b=>{const p=b.classList.contains('pl');b.style.width=p?'25px':'24px';b.ariaLabel='pick';b.innerHTML=`<svg class="mx-auto" width="17" height="17" fill="none" stroke="#000"><rect x=".5" y=".5" width="15" height="15"/><path d="M4 4l8 9" stroke-width="2"/><path d="M3 3h6L3 9z" fill="#000" stroke="none"/>${p?'<path d="M11.500 2v6M9 5h5"/>':''}</svg>`});
$('#minmax').innerHTML=['Length','Angle '].map((t,i)=>`<div class="d-flex align-items-center" style="white-space:pre"><label class="d-flex align-items-center"><input type="checkbox" class="tick">${t}</label><label class="ms-2 d-flex align-items-center">Min:<input class="well sm dim ms-1" value="0"></label><span style="width:31px" class="ps-1">${i?'':'"'}</span><label class="d-flex align-items-center">Max:<input class="well sm dim ms-1" value="0"></label><span class="ps-1">${i?'':'"'}</span></div>`).join('');
// layer list
const A='#ffc64d',B='#9bdada',G='#9ab4bd';
$('#layers').innerHTML=[[['sig3t',A],['sig4t',A],['sig5b',A],['sig6t',A],['sig7b',A],['sig8b',A],['sig9b',A]],[['ss.etch',B]],[['ss',A],['bs','#04a47c'],['bo','#fff',1]],[...['drl','2rd','drl2-9','laser1-2','laser2-3','szdrl3-8','laser8-9','laser9-10'].map(x=>[x,G]),['rout','#d8d8d8']],['cvia','tp','bp','dh','gd1','gd2','gd3'].map(x=>[x,B])].map(g=>'<div class="lg">'+g.map(([n,c,on])=>`<div class="lr d-flex align-items-center"><input type="checkbox" id="L${n}"><b style="background:${on?'#459a06':'#000'}"></b><label for="L${n}" style="background:${c}">${n}</label></div>`).join('')+'</div>').join('');
// board artwork
const H='C144,1277,528 C146,1286,542 R102,1263,552 R72,1268,571 C66,1466,527 C67,1473,541 R65,1451,552 R198,1449,573 R60,1561,568 C84,1636,559 C195,1607,577 U18,1312,594 R88,1356,590 U10,1502,594 U21,1249,650 R156,1333,620 1,1268,667 C173,1311,706 C171,1390,695 C172,1390,713 R120,1382,727 R137,1293,729 C180,1239,745 C181,1239,759 C60,1263,776 C59,1263,787 R116,1258,809 R129,1258,819 R165,1238,831 R136,1282,843 C170,1282,853 U2,1384,865 1,1403,866 C92,1420,614 C93,1420,625 C91,1420,637 C96,1420,647 C94,1420,658 C95,1420,669 L15,1419,680 C99,1497,624 L16,1516,637 C106,1512,647 C104,1512,659 C105,1512,669 L18,1507,680 R133,1467,694 R199,1543,588 R178,1626,600 C183,1626,611 R157,1643,624 C190,1644,637 U24,1546,650 1,1553,667 R155,1630,682 C115,1463,747 C114,1451,768 C120,1449,790 C52,1452,799 C116,1438,827 C112,1519,797 C42,1479,896';
const V='C75,1639,534 R241,1381,570 C155,1399,597 C156,1418,595 C167,1338,657 R161,1258,683 L79,1258,710 R154,1327,685 C179,1336,697 R166,1291,873 R167,1316,870 R101,1327,873 C169,1339,873 C12,1369,862 R206,1404,752 R106,1409,823 C34,1414,975 L17,1457,605 C97,1468,610 R175,1547,610 C182,1583,608 R103,1661,647 R176,1557,712 R177,1569,712 R180,1580,712 R172,1591,712 C113,1500,758 C117,1488,822 C33,1458,975';
const tx=(s,v)=>s.split(' ').map(t=>{const[a,x,y]=t.split(',');return `<text transform="translate(${x} ${y}) scale(-1 1)${v?' rotate(-90)':''}" y="4">${a}</text>`}).join('');
const rects='1294,516,31,20 1399,516,32,20 1390,549,17,32 1407,549,18,32 1478,516,31,20 1584,516,32,20 1616,516,17,34 1592,551,32,17 1575,549,17,32 1343,686,31,16 1343,704,31,16 1309,711,17,32 1327,711,17,32 1348,733,29,49 1254,735,32,17 1254,752,32,17 1346,841,17,32'.split(' ').map(r=>{const[x,y,w,h]=r.split(',');return `<rect x="${x}" y="${y}" width="${w}" height="${h}"/>`}).join('');
let tk='';const vt=(x,y,n,d)=>{for(let i=0;i<n;i++)tk+=`M${x+i*d} ${y-3}v6`},ht=(x,y,n,d)=>{for(let i=0;i<n;i++)tk+=`M${x-3} ${y+i*d}h6`};
vt(1336,528,5,12);vt(1521,528,5,12);vt(1266,609,5,11);vt(1265,687,5,11);vt(1551,688,5,11);vt(1309,847,4,12);vt(1386,799,3,12);vt(1453,663,2,12);vt(1419,733,2,12);vt(1422,763,2,12);vt(1422,783,2,12);vt(1565,610,2,12);vt(1655,670,2,12);vt(1320,648,2,11);vt(1493,782,2,12);
ht(1284,770,7,11);ht(1363,784,5,11);ht(1442,609,8,11);ht(1486,651,4,11);ht(1289,565,2,11);ht(1474,556,4,9);ht(1539,570,3,12);ht(1601,598,3,11);ht(1618,618,3,12);ht(1439,742,2,11);ht(1477,902,2,12);ht(1262,825,2,11);ht(1354,570,3,11);ht(1465,676,2,12);ht(1296,738,2,11);
const br=[576,674,772,870].map(y=>`M1221 ${y}q4 0 5 4 2 0 2 4l-2 3v28q-1 3 2 4 0 5-2 4 0 4-5 4`).join('');
$('#pcb').innerHTML=`<g fill="none" stroke="#fff">
<path d="M1693 520V994q-2 18-20 22H1221"/><path d="${br}"/></g>
<g fill="none" stroke="#4c8c14">${rects}<path d="${tk}" stroke-width="1.500"/><path d="M1301 560h41M1301 586h41M1486 560h39M1486 587h39M1299 786h50v46h-50zM1431 522v27M1376 825v21M1401 825v21M1420 964v25M1441 964v25M1464 964v25M1485 964v25M1421 708v6h8M1310 549h8M1325 552l5-3v6" stroke-width="2"/></g>
<g fill="#4a9410" stroke="#4a9410" stroke-width=".3" font-family="Liberation Sans" font-size="11" text-anchor="middle">${tx(H)}${tx(V,1)}</g>
<path d="M1349 822v14h-10l4-4z" fill="#459a06"/>
<g fill="#459a06"><path d="M1547 864l74 36v25h-74v-25h26l-26-13z"/><path d="M1620 727l-10 20 17 2 9 7zM1606 756l-13 22 20-11zM1591 784l27-15 3 7 9 5 7-6 2-8-2-8 15 25z"/><path d="M1622 768l3-3 2 6 3-5 1 10-5 2z"/>
<path d="M1642 795q-12 5-9 20 3 12 17 13 8 0 10 5v13h15v-6h-6v-11q-3-8-15-9-10-1-9-6h17l-4-10z"/><path d="M1644 794h28M1650 798h24M1662 803h12M1662 808h14M1648 813h29M1648 818h29M1665 823l14 2M1667 828l14 2M1670 833l11 3" stroke="#459a06" stroke-width="2"/>
<g font-family="Liberation Sans">
<text transform="translate(1621 948) scale(-1 1)" font-size="22" font-weight="700">LUMUS</text>
<text transform="translate(1621 968) scale(-1 1)" font-size="19">P/N680-68-050</text>
<text transform="translate(1621 986) scale(-1 1)" font-size="19">Rev.A</text>
<text transform="translate(1629 806) scale(-1 1)" font-size="16">E204460</text>
<text transform="translate(1629 825) scale(-1 1)" font-size="16">M11 S 94V-0</text>
<text transform="translate(1574 849) scale(-1 1)" font-size="10">c</text><text transform="translate(1546 850) scale(-1 1)" font-size="10">US</text></g>
<path d="M1549 838h17l-4 10h-5l2-7-6 7h-5z"/></g>
<g fill="none" stroke="#459a06" stroke-width="2"><circle cx="1542" cy="835" r="6"/><circle cx="1648" cy="839" r="6"/><path d="M1540 838v-5h4v5M1646 841l4-5v5z"/></g>
<g fill="none" stroke="#c89a1c" stroke-width="1.500" stroke-dasharray="3 1.500">${[1585,1595,1606,1617].map(x=>`<path d="M${x} 835h6v14h-6zM${x} 842h6"/>`).join('')}</g>`;
</script>
</body>
</html>
